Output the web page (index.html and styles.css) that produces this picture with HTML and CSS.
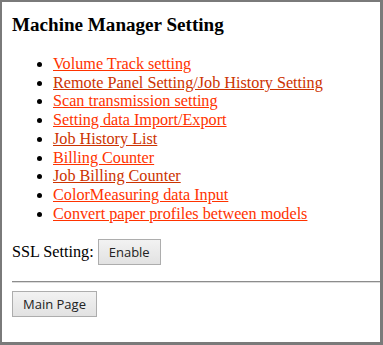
FILE: index.html
```html
<!DOCTYPE html>
<html lang="en">
<head>
  <meta charset="UTF-8">
  <title>Machine Manager Setting</title>
  <link rel="stylesheet" href="styles.css">
</head>
<body>
  <div class="frame">
    <h3 class="title">Machine Manager Setting</h3>
    <ul class="menu">
      <li><a href="#">Volume Track setting</a></li>
      <li><a href="#" class="visited">Remote Panel Setting/Job History Setting</a></li>
      <li><a href="#">Scan transmission setting</a></li>
      <li><a href="#">Setting data Import/Export</a></li>
      <li><a href="#" class="visited">Job History List</a></li>
      <li><a href="#">Billing Counter</a></li>
      <li><a href="#" class="visited">Job Billing Counter</a></li>
      <li><a href="#">ColorMeasuring data Input</a></li>
      <li><a href="#">Convert paper profiles between models</a></li>
    </ul>
    <div class="ssl">
      SSL Setting:
      <button class="btn">Enable</button>
    </div>
    <hr class="rule">
    <button class="btn">Main Page</button>
  </div>
</body>
</html>
```

FILE: styles.css
```css
html, body {
  margin: 0;
  padding: 0;
  background: #ffffff;
}
body {
  font-family: "Liberation Serif", "Times New Roman", serif;
  font-size: 16.2px;
  color: #000000;
}
.frame {
  box-sizing: border-box;
  width: 383px;
  height: 345px;
  border-top: 2px solid #7a7a7a;
  border-left: 2px solid #7a7a7a;
  border-right: 3px solid #7a7a7a;
  border-bottom: 3px solid #7a7a7a;
  padding: 12px 0 0 10px;
  overflow: hidden;
}
.title {
  font-size: 19.1px;
  font-weight: bold;
  line-height: 21.5px;
  margin: 0 0 19.5px 0;
}
.menu {
  margin: 0 0 16.5px 0;
  padding-left: 41px;
  line-height: 18.7px;
}
.menu a {
  color: #ff3300;
  text-decoration: underline;
}
.menu a.visited {
  color: #cc3300;
}
.ssl {
  display: flex;
  align-items: center;
  gap: 4px;
  height: 25px;
}
.btn {
  font-family: "Open Sans", "Noto Sans", sans-serif;
  font-size: 13px;
  color: #222222;
  height: 26px;
  padding: 0 10px;
  border: 1px solid #adadad;
  border-radius: 0;
  background: linear-gradient(#f2f2f2, #e2e2e2);
}
.rule {
  margin: 16px 0 8px 0;
  border: 0;
  border-top: 1px solid #8c8c8c;
  border-bottom: 1px solid #dcdcdc;
  height: 0;
}
```
